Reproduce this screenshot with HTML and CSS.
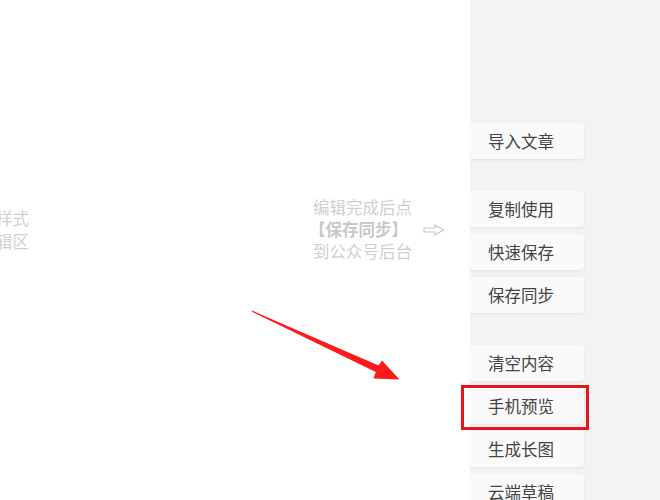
FILE: index.html
```html
<!DOCTYPE html>
<html lang="zh">
<head>
<meta charset="utf-8">
<title>编辑器</title>
<link rel="stylesheet" href="styles.css">
</head>
<body>
<div class="page">
  <div class="canvas">
    <div class="hint-left">
      <div>选择样式</div>
      <div>到编辑区</div>
    </div>
    <div class="hint-mid">
      <div class="hint-text">
        <div>编辑完成后点</div>
        <div class="strong">【保存同步】</div>
        <div>到公众号后台</div>
      </div>
      <svg class="hollow-arrow" width="22" height="12" viewBox="0 0 22 12">
        <path d="M1 4 H12 V1 L20.5 6 L12 11 V8 H1 Z" fill="none" stroke="#c8c8c8" stroke-width="1.2" stroke-linejoin="miter"/>
      </svg>
    </div>
    <svg class="red-arrow" width="470" height="500" viewBox="0 0 470 500">
      <polygon points="251.5,310.3 378.6,365.6 382,360.5 399.5,379.5 373.5,378.5 375.8,372 252.5,312" fill="#ff1a1a"/>
    </svg>
  </div>
  <div class="panel">
    <div class="group">
      <div class="btn">导入文章</div>
    </div>
    <div class="group">
      <div class="btn">复制使用</div>
      <div class="btn">快速保存</div>
      <div class="btn">保存同步</div>
    </div>
    <div class="group">
      <div class="btn">清空内容</div>
      <div class="btn highlighted">手机预览</div>
      <div class="btn">生成长图</div>
      <div class="btn">云端草稿</div>
    </div>
  </div>
</div>
</body>
</html>
```

FILE: styles.css
```css
html, body {
  margin: 0;
  padding: 0;
  background: #ffffff;
}
body {
  font-family: "Noto Sans CJK SC", "Noto Sans", sans-serif;
  font-size: 16px;
}
.page {
  display: flex;
  width: 660px;
  height: 500px;
  overflow: hidden;
}
.canvas {
  position: relative;
  flex: 0 0 470px;
  display: flex;
  align-items: flex-start;
  background: #ffffff;
}
.hint-left {
  margin-top: 207px;
  margin-left: -37px;
  width: 66px;
  text-align: right;
  color: #d0d0d0;
  font-size: 16.5px;
  line-height: 23px;
  white-space: nowrap;
}
.hint-mid {
  margin-top: 196px;
  margin-left: 284px;
  display: flex;
  align-items: center;
  gap: 11px;
  color: #cfcfcf;
  font-size: 16.5px;
}
.hint-text {
  line-height: 22px;
  white-space: nowrap;
}
.hint-text .strong {
  font-weight: 700;
  margin-left: -4px;
  color: #c8c8c8;
}
.hollow-arrow {
  display: block;
  margin-top: 2px;
}
.red-arrow {
  position: absolute;
  left: 0;
  top: 0;
  pointer-events: none;
}
.panel {
  flex: 1;
  background: #f2f3f3;
  padding-top: 123px;
  display: flex;
  flex-direction: column;
  gap: 32px;
}
.group {
  display: flex;
  flex-direction: column;
  gap: 7px;
}
.btn {
  position: relative;
  width: 96px;
  height: 36px;
  padding-left: 18px;
  display: flex;
  align-items: center;
  background: #fafafa;
  color: #444444;
  font-size: 16.5px;
  border-radius: 0 4px 4px 0;
  box-shadow: 0 1px 3px rgba(0, 0, 0, 0.08);
  line-height: 1;
  white-space: nowrap;
}
.btn.highlighted::after {
  content: "";
  position: absolute;
  left: -9px;
  right: -5px;
  top: -3px;
  bottom: -6px;
  border: 3px solid #e8131c;
  pointer-events: none;
}
```
